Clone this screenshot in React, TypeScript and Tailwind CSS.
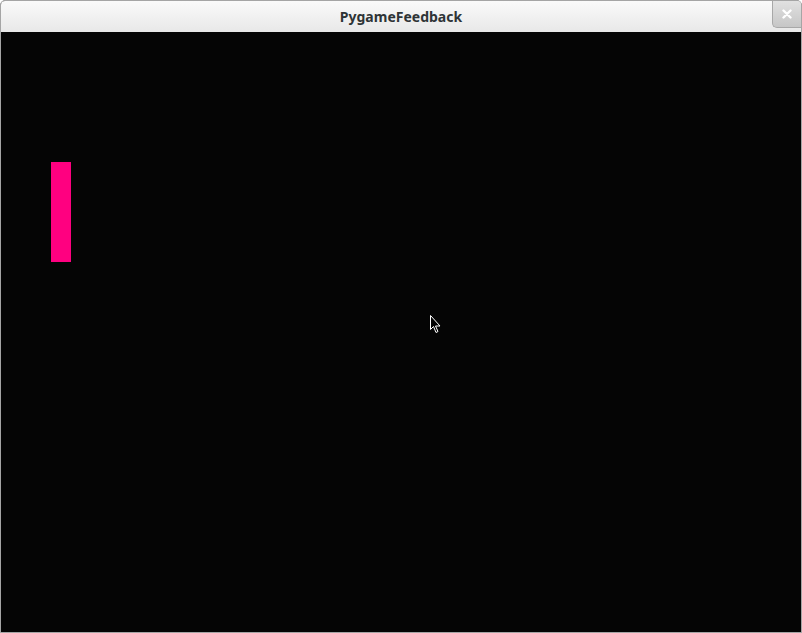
export default function App() {
  return (
    <div className="flex h-[633px] w-[802px] flex-col overflow-hidden rounded-t-[5px] border border-[#a5a5a5] bg-black font-['Noto_Sans',sans-serif]">
      {/* title bar */}
      <div className="relative flex h-[31px] shrink-0 items-center justify-center bg-gradient-to-b from-[#fafafa] to-[#e8e8e8]">
        <span className="text-[14px] font-bold text-[#2e3436]">PygameFeedback</span>
        <button className="absolute right-0 top-[-1px] flex h-[28px] w-[29px] items-center justify-center rounded-bl-[5px] border-b border-l border-[#a8a8a8] bg-gradient-to-b from-[#e2e2e2] to-[#c6c6c6]">
          <svg width="10" height="10" viewBox="0 0 10 10">
            <path d="M1.5 1.5 L8.5 8.5 M8.5 1.5 L1.5 8.5" stroke="#fff" strokeWidth="2.4" strokeLinecap="round" />
          </svg>
        </button>
      </div>
      {/* game surface */}
      <div className="relative flex-1 bg-[#050505]">
        <div className="absolute left-[50px] top-[130px] h-[100px] w-[20px] bg-[#ff0080]" />
        <svg className="absolute left-[429px] top-[283px]" width="12" height="19" viewBox="0 0 12 19">
          <path d="M0.5 0.5 L0.5 14.5 L3.5 11.5 L6 17.5 L8 16.5 L5.5 11 L10 11 Z" fill="#000" stroke="#fff" strokeWidth="1" />
        </svg>
      </div>
    </div>
  )
}
